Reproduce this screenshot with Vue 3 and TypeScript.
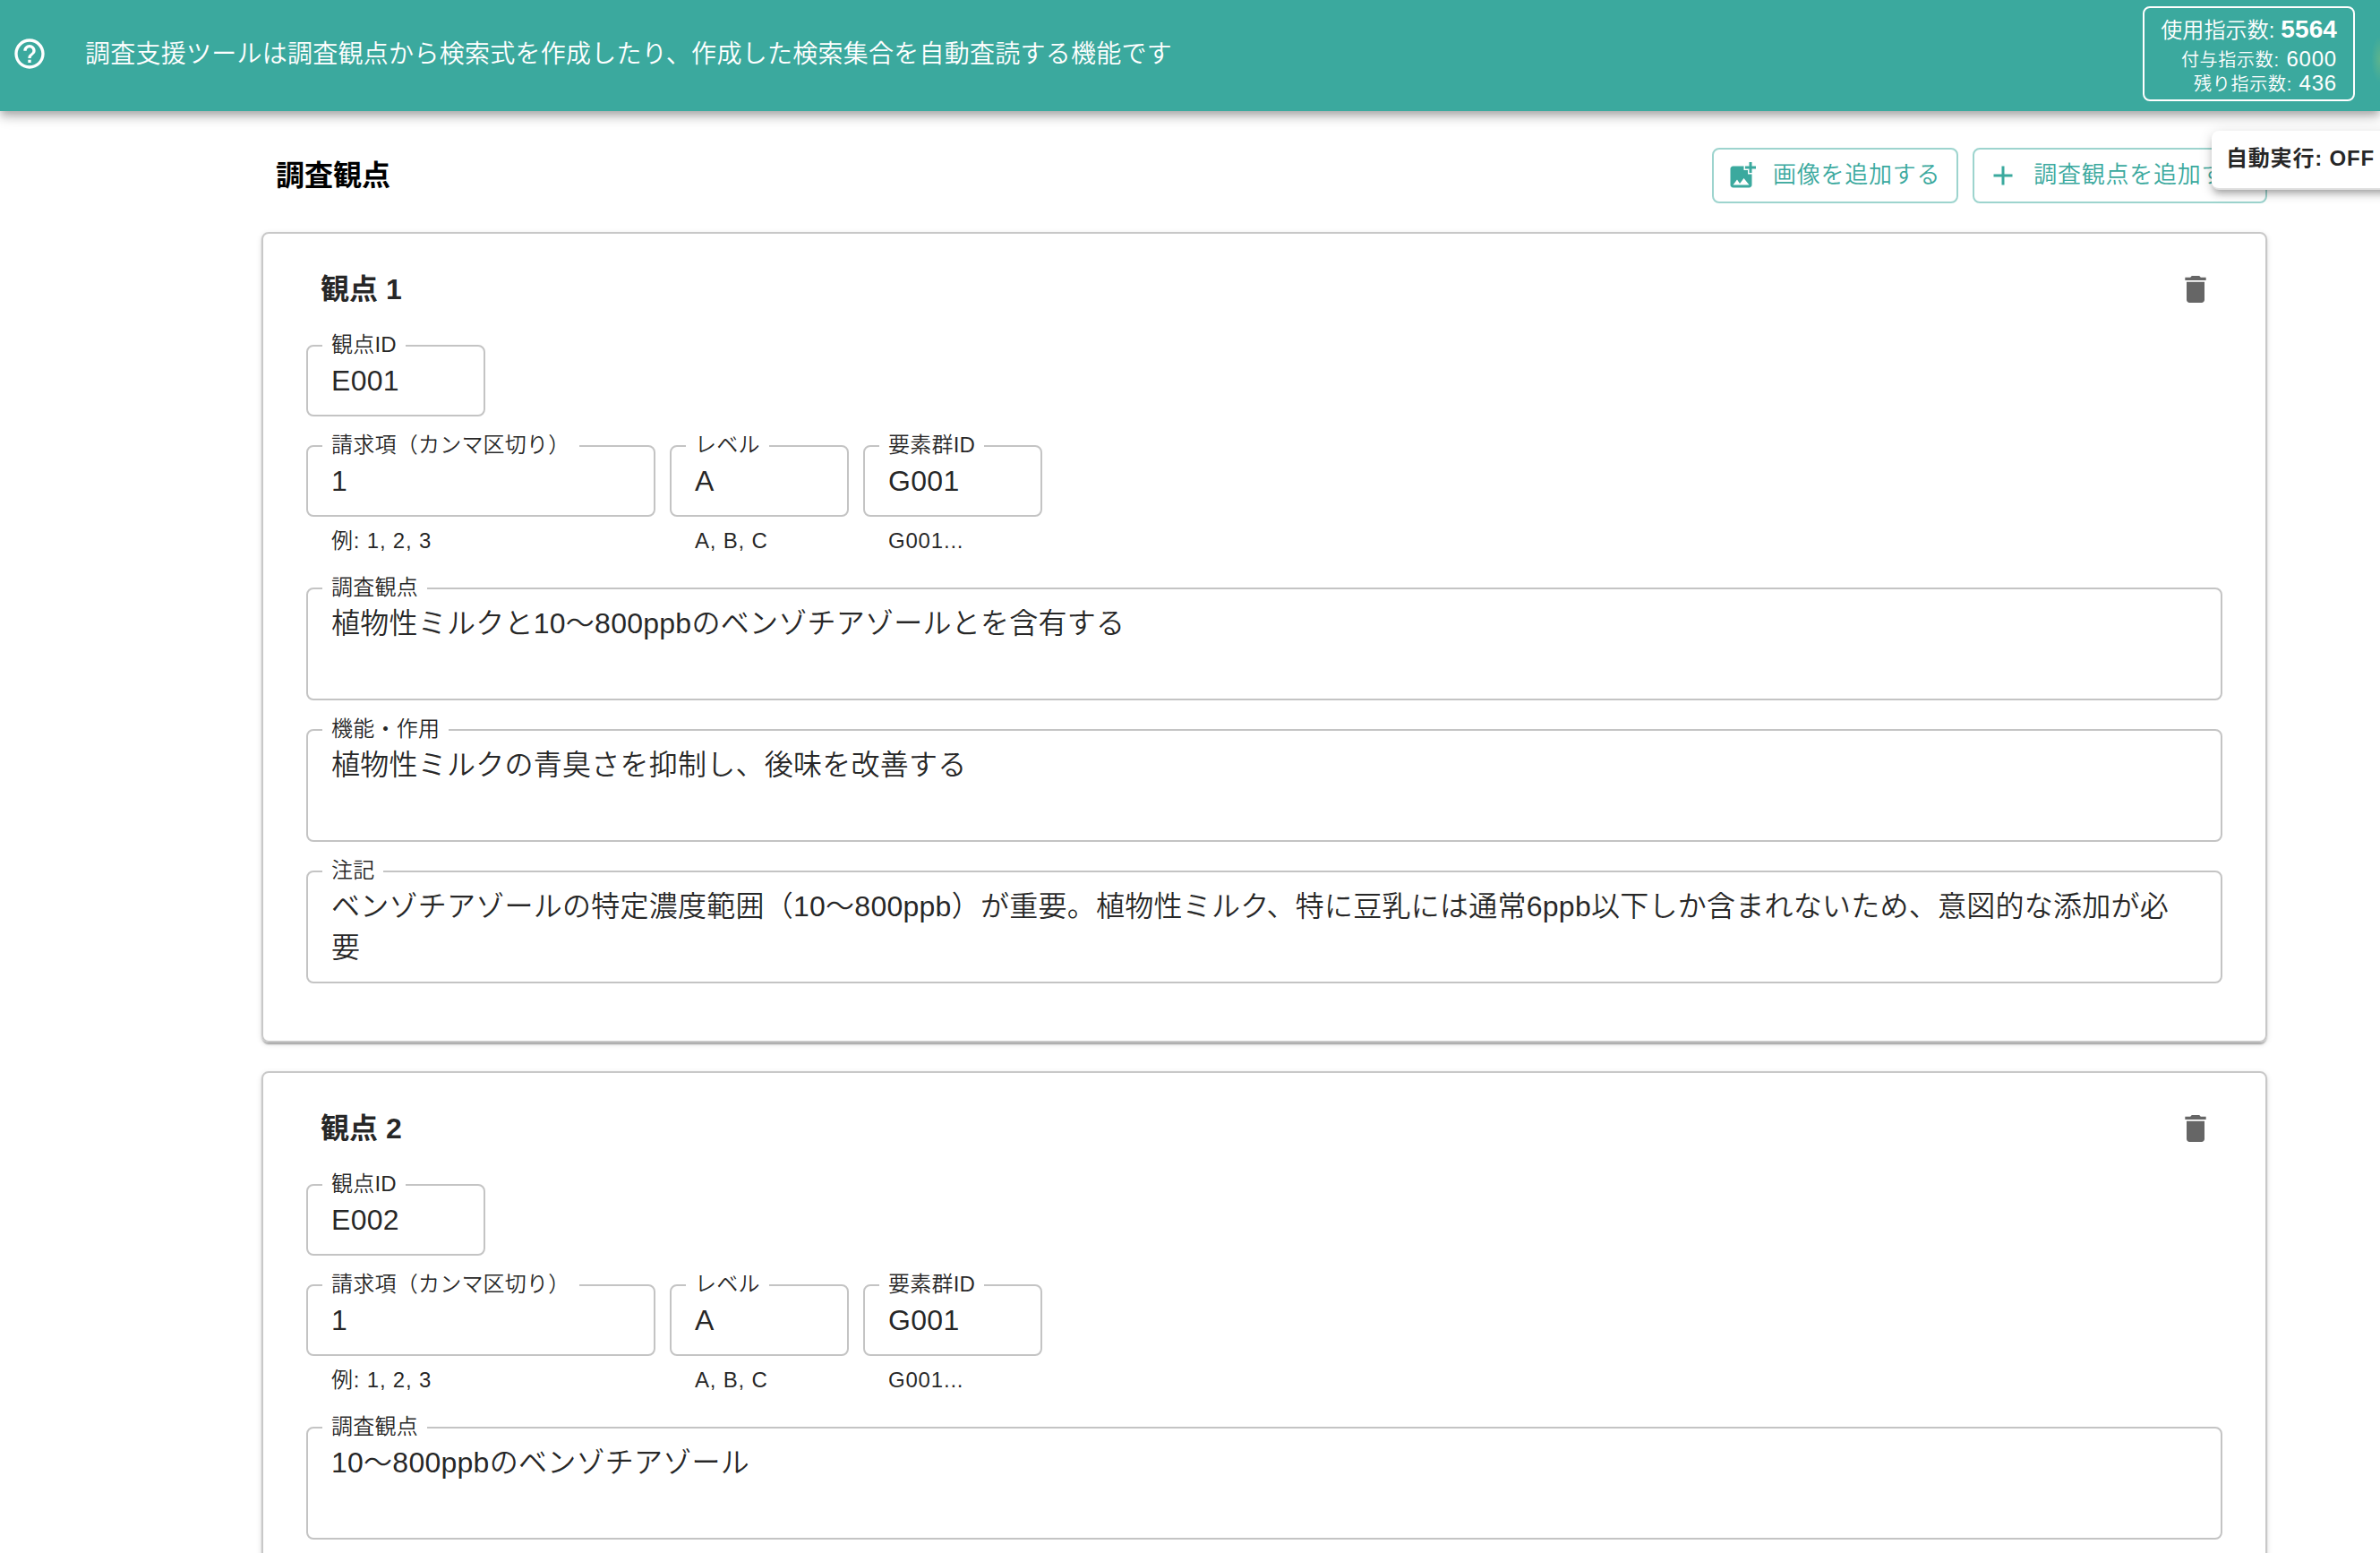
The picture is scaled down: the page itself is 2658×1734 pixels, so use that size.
<script setup lang="ts">
interface Field {
  label: string
  value: string
  helper?: string
  size: 'small' | 'claims'
}
interface Viewpoint {
  no: number
  id: string
  meta: Field[]
  texts: { label: string; value: string }[]
}

const metaFields = (): Field[] => [
  { label: '請求項（カンマ区切り）', value: '1', helper: '例: 1, 2, 3', size: 'claims' },
  { label: 'レベル', value: 'A', helper: 'A, B, C', size: 'small' },
  { label: '要素群ID', value: 'G001', helper: 'G001...', size: 'small' },
]

const viewpoints: Viewpoint[] = [
  {
    no: 1,
    id: 'E001',
    meta: metaFields(),
    texts: [
      { label: '調査観点', value: '植物性ミルクと10〜800ppbのベンゾチアゾールとを含有する' },
      { label: '機能・作用', value: '植物性ミルクの青臭さを抑制し、後味を改善する' },
      {
        label: '注記',
        value:
          'ベンゾチアゾールの特定濃度範囲（10〜800ppb）が重要。植物性ミルク、特に豆乳には通常6ppb以下しか含まれないため、意図的な添加が必要',
      },
    ],
  },
  {
    no: 2,
    id: 'E002',
    meta: metaFields(),
    texts: [{ label: '調査観点', value: '10〜800ppbのベンゾチアゾール' }],
  },
]
</script>

<template>
  <div class="page">
    <header class="bar">
      <svg class="help" viewBox="0 0 24 24"><path d="M11 18h2v-2h-2v2zm1-16C6.48 2 2 6.48 2 12s4.480 10 10 10 10-4.480 10-10S17.520 2 12 2zm0 18c-4.410 0-8-3.590-8-8s3.590-8 8-8 8 3.590 8 8-3.590 8-8 8zm0-14c-2.210 0-4 1.790-4 4h2c0-1.100.9-2 2-2s2 .9 2 2c0 2-3 1.750-3 5h2c0-2.250 3-2.500 3-5 0-2.210-1.790-4-4-4z" /></svg>
      <p class="lead">調査支援ツールは調査観点から検索式を作成したり、作成した検索集合を自動査読する機能です</p>
      <div class="usage">
        <div class="used">使用指示数: <b>5564</b></div>
        <div class="sub"><span>付与指示数:</span> 6000</div>
        <div class="sub"><span>残り指示数:</span> 436</div>
      </div>
    </header>

    <aside class="auto">自動実行: OFF</aside>

    <main class="content">
      <div class="toolbar">
        <h1>調査観点</h1>
        <button class="btn" type="button">
          <svg viewBox="0 0 24 24"><path d="M19 7v2.990s-1.990.01-2 0V7h-3s.01-1.990 0-2h3V2h2v3h3v2h-3zm-3 4V8h-3V5H5c-1.100 0-2 .9-2 2v12c0 1.100.9 2 2 2h12c1.100 0 2-.9 2-2v-8h-3zM5 19l3-4 2 3 3-4 4 5H5z" /></svg>
          <span>画像を追加する</span>
        </button>
        <button class="btn" type="button">
          <svg viewBox="0 0 24 24"><path d="M19 13h-6v6h-2v-6H5v-2h6V5h2v6h6v2z" /></svg>
          <span>調査観点を追加する</span>
        </button>
      </div>

      <section v-for="v in viewpoints" :key="v.no" class="card">
        <div class="card-head">
          <h2>観点 {{ v.no }}</h2>
          <svg class="trash" viewBox="0 0 24 24"><path d="M6 19c0 1.100.9 2 2 2h8c1.100 0 2-.9 2-2V7H6v12zM19 4h-3.500l-1-1h-5l-1 1H5v2h14V4z" /></svg>
        </div>
        <div class="field small">
          <div class="box"><span class="label">観点ID</span>{{ v.id }}</div>
        </div>
        <div class="row">
          <div v-for="f in v.meta" :key="f.label" class="field" :class="f.size">
            <div class="box"><span class="label">{{ f.label }}</span>{{ f.value }}</div>
            <div class="helper">{{ f.helper }}</div>
          </div>
        </div>
        <div class="texts">
          <div v-for="t in v.texts" :key="t.label" class="box area">
            <span class="label">{{ t.label }}</span>{{ t.value }}
          </div>
        </div>
      </section>
    </main>
  </div>
</template>

<style>
html,
body {
  margin: 0;
  overflow: hidden;
}
</style>

<style scoped>
.page {
  position: relative;
  width: 2658px;
  height: 1734px;
  overflow: hidden;
  background: #fff;
  color: rgba(0, 0, 0, 0.87);
  font-family: 'Liberation Sans', 'Noto Sans CJK JP', sans-serif;
  font-size: 32px;
  font-weight: 350;
  line-height: 46px;
  letter-spacing: 0.3px;
}
.page * {
  box-sizing: border-box;
}
.bar {
  position: relative;
  display: flex;
  align-items: center;
  height: 124px;
  padding: 0 28px 4px 13px;
  background: #3ba99e;
  color: #fff;
  box-shadow:
    0 4px 8px -2px rgba(0, 0, 0, 0.2),
    0 8px 10px 0 rgba(0, 0, 0, 0.14),
    0 2px 20px 0 rgba(0, 0, 0, 0.12);
}
/* edge of the avatar glow that runs off the right side */
.bar::after {
  content: '';
  position: absolute;
  right: 0;
  top: 40px;
  width: 10px;
  height: 52px;
  background: radial-gradient(ellipse at 100% 50%, rgba(125, 190, 125, 0.5), rgba(125, 190, 125, 0) 70%);
}
.help {
  width: 40px;
  height: 40px;
  fill: currentColor;
}
.lead {
  margin: 0 auto 0 42px;
  padding-top: 2px;
  font-size: 28px;
  letter-spacing: 0.26px;
}
.usage {
  width: 237px;
  height: 106px;
  padding: 7px 18px 0 0;
  border: 2px solid #fff;
  border-radius: 8px;
  text-align: right;
  white-space: nowrap;
}
.used {
  font-size: 24px;
  line-height: 36px;
  letter-spacing: 0.1px;
}
.used b {
  font-size: 28px;
  font-weight: 700;
  line-height: 28px;
}
.sub {
  font-size: 24px;
  line-height: 27px;
  letter-spacing: 0.8px;
}
.sub span {
  font-size: 20px;
  line-height: 20px;
  letter-spacing: 0.75px;
}
.auto {
  position: absolute;
  z-index: 2;
  left: 2470px;
  top: 146px;
  width: 220px;
  height: 66px;
  padding-left: 16px;
  border-bottom: 2px solid #e0e0e0;
  border-radius: 8px;
  background: #fff;
  font-size: 24px;
  font-weight: 700;
  line-height: 62px;
  letter-spacing: 0.8px;
  white-space: nowrap;
  box-shadow:
    0 6px 6px -4px rgba(0, 0, 0, 0.2),
    0 6px 8px 0 rgba(0, 0, 0, 0.14),
    0 2px 16px 0 rgba(0, 0, 0, 0.12);
}
.content {
  width: 2240px;
  margin: 0 0 0 292px;
}
.toolbar {
  display: flex;
  align-items: center;
  gap: 16px;
  height: 62px;
  margin: 41px 0 32px;
}
h1,
h2 {
  margin: 0;
  font-size: 32px;
  font-weight: 700;
  letter-spacing: 0;
}
h1 {
  flex: 1;
  padding-left: 16px;
  color: #000;
}
.btn {
  display: flex;
  align-items: center;
  gap: 16px;
  height: 62px;
  padding: 0 18px 0 14px;
  border: 2px solid rgba(59, 169, 158, 0.5);
  border-radius: 8px;
  background: none;
  color: #3ba99e;
  font: inherit;
  font-size: 26px;
  letter-spacing: 0.743px;
  white-space: nowrap;
}
.btn span {
  padding-bottom: 2px;
}
.btn svg {
  width: 36px;
  height: 36px;
  fill: currentColor;
}
.card {
  height: 905px;
  margin-bottom: 32px;
  padding: 39px 48px 0;
  border: 2px solid #c8c8c8;
  border-radius: 8px;
  box-shadow:
    0 4px 2px -2px rgba(0, 0, 0, 0.2),
    0 2px 2px 0 rgba(0, 0, 0, 0.14),
    0 2px 6px 0 rgba(0, 0, 0, 0.12);
}
.card-head {
  display: flex;
  align-items: center;
  justify-content: space-between;
  height: 46px;
  margin-bottom: 39px;
  padding: 0 10px 0 16px;
}
.trash {
  width: 40px;
  height: 40px;
  fill: #666;
}
.small {
  width: 200px;
}
.claims {
  width: 390px;
}
.row {
  display: flex;
  gap: 16px;
  margin-top: 32px;
}
.box {
  position: relative;
  height: 80px;
  padding: 15px 26px;
  border: 2px solid #c4c4c4;
  border-radius: 8px;
}
.area {
  height: 126px;
  letter-spacing: 0.25px;
}
.label {
  position: absolute;
  left: 16px;
  top: -19px;
  padding: 0 10px;
  background: #fff;
  font-size: 24px;
  line-height: 34px;
  letter-spacing: 0.23px;
  white-space: nowrap;
}
.helper {
  margin-top: 7px;
  padding-left: 28px;
  font-size: 24px;
  line-height: 40px;
  letter-spacing: 0.8px;
}
.texts {
  display: flex;
  flex-direction: column;
  gap: 32px;
  margin-top: 32px;
}
</style>
